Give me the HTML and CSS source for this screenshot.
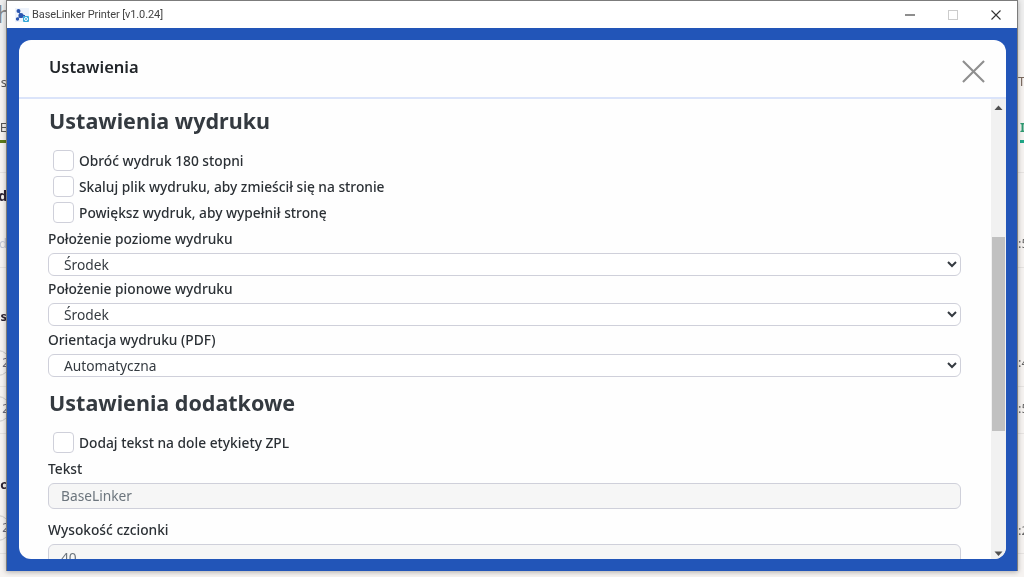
FILE: index.html
```html
<!DOCTYPE html>
<html lang="pl">
<head>
<meta charset="utf-8">
<title>BaseLinker Printer</title>
<link rel="stylesheet" href="styles.css">
</head>
<body>
<div class="desktop">
  <div class="backdrop">
    <div class="band band-top"></div>
    <span class="frag f-h">h</span>
    <span class="frag f-us">us</span>
    <span class="frag f-e">E</span>
    <div class="bar bar-l"></div>
    <span class="frag bold f-d1">d</span>
    <span class="frag f-d2">d</span>
    <span class="frag bold f-s">s</span>
    <span class="pill p1">2</span>
    <span class="pill p2">2</span>
    <span class="frag bold f-ec">ec</span>
    <span class="pill p3">2</span>
    <div class="rule r1"></div>
    <div class="rule r2"></div>
    <div class="rule r3"></div>
    <div class="rule r4"></div>
    <div class="rule r5"></div>
    <span class="frag f-tre">Tre</span>
    <span class="frag f-ii">II</span>
    <div class="bar bar-r"></div>
    <span class="frag f-t1">:5</span>
    <span class="frag f-t2">:4</span>
    <span class="frag f-t3">:5</span>
    <span class="frag f-t4">:2</span>
  </div>
  <div class="win">
    <div class="titlebar">
      <svg class="appicon" width="14" height="14" viewBox="0 0 14 14"><rect width="14" height="14" fill="#eef3fb"/><circle cx="3.500" cy="3" r="2" fill="#2a55b0"/><circle cx="6" cy="7.500" r="2.600" fill="#2a55b0"/><circle cx="2.500" cy="11" r="1.700" fill="#2a55b0"/><path d="M3.500 3 6 7.500 2.500 11M6 7.500H10" stroke="#2a55b0" fill="none"/><rect x="8" y="8" width="6" height="6" rx="1" fill="#35a8d8"/><circle cx="11" cy="11" r="1.500" fill="none" stroke="#fff"/></svg>
      <span class="apptitle">BaseLinker Printer [v1.0.24]</span>
      <div class="winbtns">
        <svg class="winbtn" width="10" height="10" viewBox="0 0 10 10"><path d="M0 5H10" stroke="#444" stroke-width="1.200"/></svg>
        <svg class="winbtn" width="10" height="10" viewBox="0 0 10 10"><rect x=".5" y=".5" width="9" height="9" fill="none" stroke="#ccc"/></svg>
        <svg class="winbtn" width="10" height="10" viewBox="0 0 10 10"><path d="M.5.500 9.500 9.500M9.500.500.500 9.500" stroke="#333" stroke-width="1.100" fill="none"/></svg>
      </div>
    </div>
    <div class="frame">
      <div class="modal">
        <div class="modal-head">
          <h5 class="modal-title">Ustawienia</h5>
          <svg class="modal-close" width="23" height="23" viewBox="0 0 24 24"><path d="M1 1 23 23M23 1 1 23" stroke="#8f8f8f" stroke-width="2.200" fill="none"/></svg>
        </div>
        <div class="modal-main">
          <div class="modal-body">
            <h4 class="section first">Ustawienia wydruku</h4>
            <label class="check"><span class="box"></span>Obróć wydruk 180 stopni</label>
            <label class="check"><span class="box"></span>Skaluj plik wydruku, aby zmieścił się na stronie</label>
            <label class="check"><span class="box"></span>Powiększ wydruk, aby wypełnił stronę</label>
            <div class="label">Położenie poziome wydruku</div>
            <select class="select"><option>Środek</option></select>
            <div class="label">Położenie pionowe wydruku</div>
            <select class="select"><option>Środek</option></select>
            <div class="label">Orientacja wydruku (PDF)</div>
            <select class="select"><option>Automatyczna</option></select>
            <h4 class="section">Ustawienia dodatkowe</h4>
            <label class="check"><span class="box"></span>Dodaj tekst na dole etykiety ZPL</label>
            <div class="label">Tekst</div>
            <input class="input" value="BaseLinker" disabled>
            <div class="label gap">Wysokość czcionki</div>
            <input class="input" value="40" disabled>
          </div>
          <div class="scrollbar">
            <svg class="arrow" width="15" height="17" viewBox="0 0 15 17"><path d="M3.500 11 7.500 6.500 11.500 11Z" fill="#505050"/></svg>
            <div class="thumb"></div>
            <svg class="arrow" width="15" height="17" viewBox="0 0 15 17"><path d="M3.500 9.500 7.500 14 11.500 9.500Z" fill="#505050"/></svg>
          </div>
        </div>
      </div>
    </div>
  </div>
</div>
</body>
</html>
```
FILE: styles.css
```css
html, body { margin: 0; padding: 0; }
body { width: 1024px; height: 577px; overflow: hidden; background: #f6f3f1; font-family: "Noto Sans", sans-serif; color: #212529; }
.desktop { position: relative; width: 1024px; height: 577px; overflow: hidden; filter: blur(.3px); }

.backdrop { position: absolute; inset: 0; }
.band-top { position: absolute; left: 0; right: 0; top: 0; height: 50px; background: #efefef; }
.frag { position: absolute; font-size: 13px; line-height: 16px; color: #666; white-space: nowrap; }
.frag.bold { font-weight: 700; color: #2c2433; }
.f-h { left: -3px; top: -1px; font-size: 24px; line-height: 30px; color: #888; }
.f-us { right: 1017px; top: 74px; color: #555; }
.f-e { right: 1017px; top: 119px; color: #555; }
.f-d1 { right: 1017px; top: 188px; font-size: 14px; }
.f-d2 { right: 1017px; top: 235px; color: #c4c8d4; }
.f-s { right: 1017px; top: 308px; }
.f-ec { right: 1017px; top: 476px; }
.f-tre { left: 1018px; top: 73px; color: #7a6a60; }
.f-ii { left: 1020px; top: 119px; font-weight: 700; color: #2f9a72; }
.f-t1 { left: 1018px; top: 235px; }
.f-t2 { left: 1018px; top: 354px; }
.f-t3 { left: 1018px; top: 400px; }
.f-t4 { left: 1018px; top: 522px; }
.bar { position: absolute; height: 3px; top: 140px; }
.bar-l { left: 0; width: 7px; background: #5d7a1c; }
.bar-r { left: 1020px; width: 4px; background: #1fa888; }
.pill { position: absolute; left: -14px; width: 22px; height: 24px; border: 1px solid #c9c9c9; border-radius: 13px; font-size: 12px; line-height: 24px; text-align: right; color: #6a6a7a; }
.p1 { top: 350px; }
.p2 { top: 396px; }
.p3 { top: 515px; }
.rule { position: absolute; left: 0; right: 0; height: 1px; background: #e6e3e1; }
.r1 { top: 172px; }
.r2 { top: 267px; }
.r3 { top: 386px; }
.r4 { top: 433px; }
.r5 { top: 553px; }

.win { position: absolute; left: 6px; top: 0; width: 1012px; height: 571px; box-sizing: border-box; border: 1px solid #7c7c7c; border-bottom: 0; display: flex; flex-direction: column; box-shadow: 0 1px 5px rgba(0,0,0,.3); }
.titlebar { height: 27px; flex: none; background: #fff; display: flex; align-items: center; padding-left: 8px; font-family: Roboto, sans-serif; font-size: 11px; letter-spacing: -.1px; color: #444; }
.appicon { margin-right: 3px; }
.winbtns { margin-left: auto; display: flex; gap: 33px; padding-right: 16px; }
.frame { flex: 1; min-height: 0; background: #2255b8; padding: 12px 11px 12px 12px; }
.modal { height: 100%; background: #fefefe; border-radius: 12px; overflow: hidden; display: flex; flex-direction: column; }
.modal-head { height: 59px; flex: none; box-sizing: border-box; border-bottom: 2px solid #dbe4fa; display: flex; align-items: center; justify-content: space-between; padding: 0 21px 0 30px; }
.modal-title { margin: 0 0 5px; font-size: 16.500px; font-weight: 600; color: #212529; }
.modal-close { margin-top: 6px; }
.modal-main { flex: 1; min-height: 0; display: flex; }
.modal-body { flex: 1; min-width: 0; overflow: hidden; padding: 0 30px 0 29px; }
.section { margin: 11.500px 0 11px; padding-left: 1px; font-size: 21.500px; font-weight: 700; color: #343a40; line-height: 30px; }
.section.first { margin-top: 7px; }
.check { display: flex; align-items: center; height: 26px; padding-left: 5px; font-size: 13.750px; font-weight: 500; color: #2b3035; }
.box { width: 19px; height: 19px; margin-right: 5px; background: #fff; border: 1px solid #cfd0da; border-radius: 4px; }
.label { font-size: 13.750px; font-weight: 500; line-height: 20px; color: #2b3035; margin: 3.500px 0 4px; }
.select { display: block; width: 100%; height: 23px; box-sizing: border-box; padding: 0 0 0 11px; background-color: #fff; border: 1px solid #cfd0da; border-radius: 6px; font-family: "Noto Sans", sans-serif; font-size: 13.750px; color: #343a40; }
.input { display: block; width: 100%; height: 26px; box-sizing: border-box; padding: 0 12px; background: #f6f6f6; border: 1px solid #cfd0da; border-radius: 6px; font-family: "Noto Sans", sans-serif; font-size: 13.750px; color: #6c757d; }
.label.gap { margin-top: 11.500px; }
.scrollbar { width: 15px; flex: none; background: #f1f1f1; display: flex; flex-direction: column; }
.arrow { flex: none; }
.thumb { width: 13px; height: 194px; margin: 121px 1px auto; background: #c1c1c1; }
```
